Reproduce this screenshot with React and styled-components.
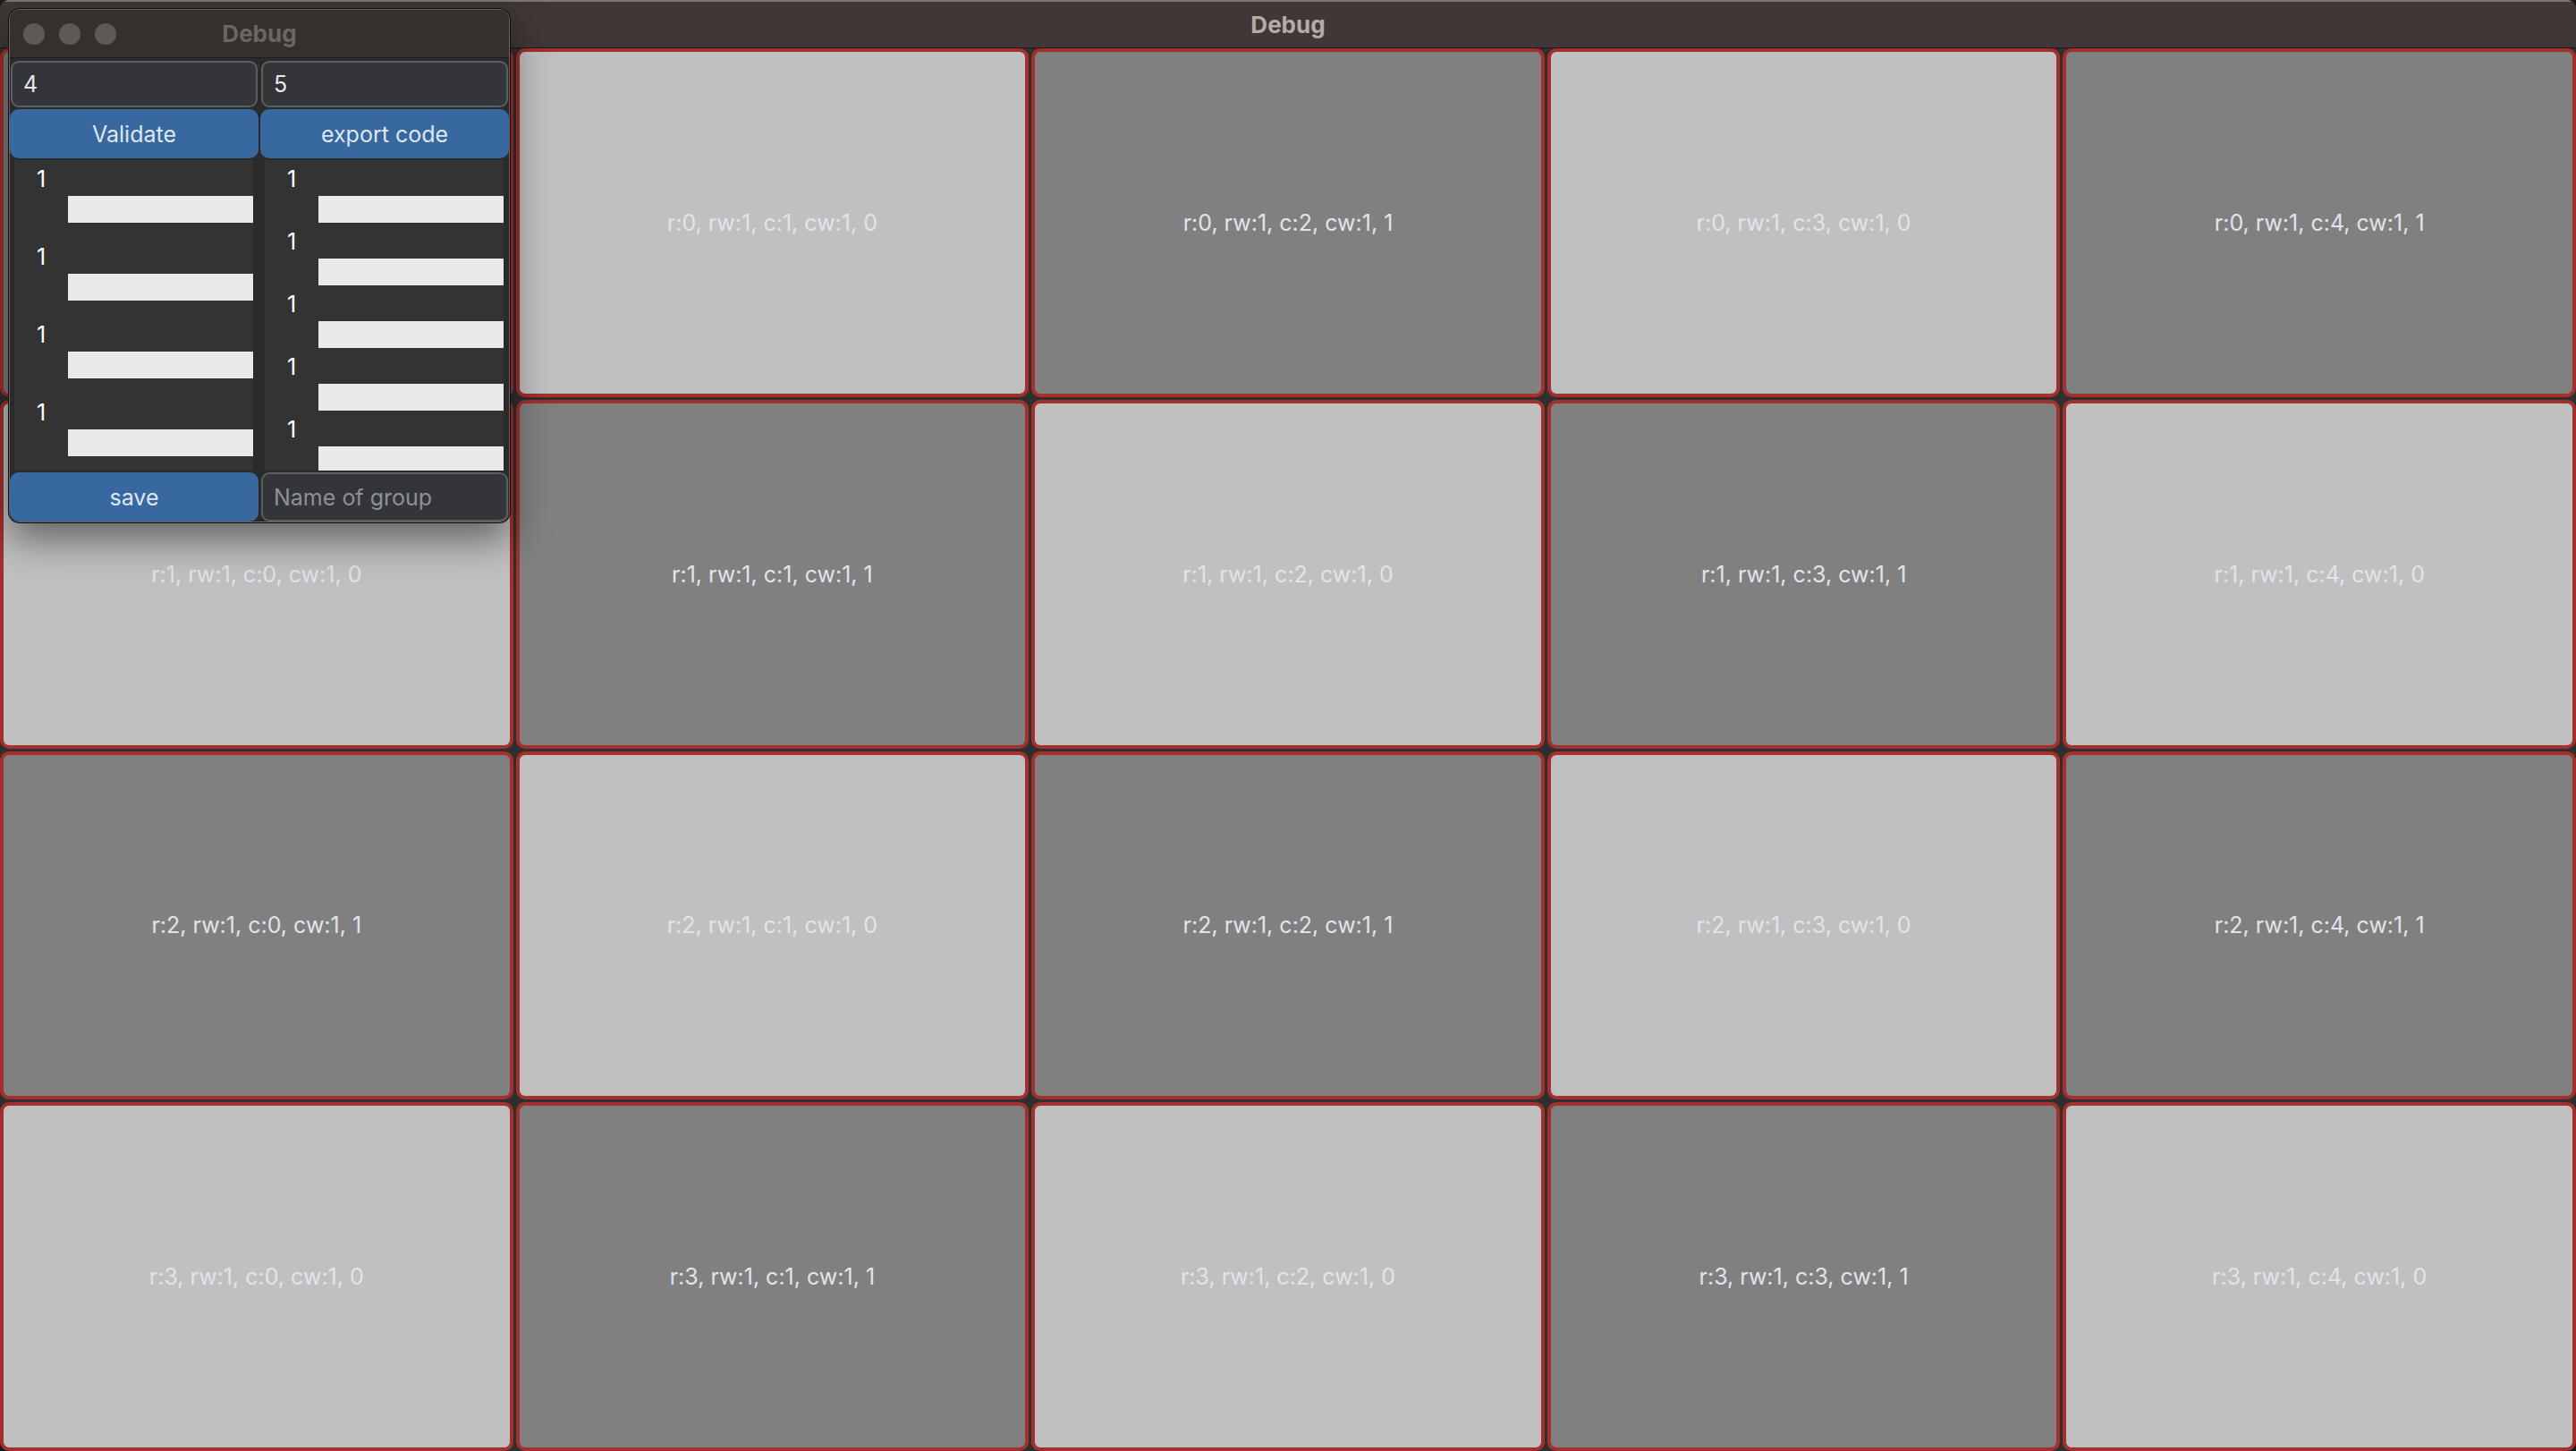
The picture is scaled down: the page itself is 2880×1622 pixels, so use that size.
import styled, { createGlobalStyle } from "styled-components";

const ROWS = 4;
const COLS = 5;

const GlobalStyle = createGlobalStyle`
    *, *::before, *::after {
        box-sizing: border-box;
    }
    html, body {
        margin: 0;
        background: #1b1b1b;
        font-family: Inter, "Noto Sans", sans-serif;
    }
    #root {
        height: 100vh;
    }
`;

const Window = styled.div`
    position: relative;
    height: 100vh;
    display: flex;
    flex-direction: column;
    border-radius: 10px;
    overflow: hidden;
    background: #2e2e2e;
`;

const TitleBar = styled.div`
    flex: none;
    height: 54px;
    display: flex;
    align-items: center;
    justify-content: center;
    background: #403836;
    border-top: 2px solid #7c7674;
    border-bottom: 1px solid #1c1a19;
`;

const Title = styled.span`
    font-size: 26px;
    font-weight: 700;
    color: ${(p) => (p.$inactive ? "#6c6662" : "#b4acaa")};
`;

const Board = styled.div`
    flex: 1;
    display: grid;
    grid-template-columns: repeat(${COLS}, 1fr);
    grid-template-rows: repeat(${ROWS}, 1fr);
    gap: 3px;
    background: #2f2f2f;
`;

const Cell = styled.div`
    display: flex;
    align-items: center;
    justify-content: center;
    border: 4px solid #a3302c;
    border-radius: 10px;
    background: ${(p) => (p.$dark ? "#808080" : "#c0c0c0")};
    color: #e0e4eb;
    font-size: 25px;
`;

const FloatWin = styled.div`
    position: absolute;
    top: 10px;
    left: 10px;
    width: 560px;
    height: 574px;
    display: flex;
    flex-direction: column;
    border: 1px solid #67625f;
    border-radius: 12px;
    overflow: hidden;
    background: #2a2a2a;
    box-shadow: 0 0 0 1px #111, 0 18px 44px rgba(0, 0, 0, 0.5);
`;

const FloatTitle = styled.div`
    flex: none;
    height: 54px;
    display: grid;
    grid-template-columns: 1fr auto 1fr;
    align-items: center;
    background: #36302c;
    border-bottom: 1px solid #1e1c1a;
`;

const Lights = styled.div`
    display: flex;
    gap: 16px;
    padding-left: 15px;
`;

const Light = styled.span`
    width: 24px;
    height: 24px;
    border-radius: 50%;
    background: #5f5955;
`;

const Body = styled.div`
    flex: 1;
    min-height: 0;
    display: grid;
    grid-template-columns: 1fr 1fr;
    grid-template-rows: 52px 55px 1fr 55px;
    column-gap: 2px;
    row-gap: 2px;
    padding-top: 3px;
`;

const Input = styled.input`
    width: auto;
    min-width: 0;
    margin: 0 1px;
    padding: 0 12px;
    border: 2px solid #5b5e62;
    border-radius: 9px;
    background: #333538;
    color: #e6e9ed;
    font-family: inherit;
    font-size: 25px;
    outline: none;
    &::placeholder {
        color: #8e9195;
    }
`;

const Button = styled.button`
    border: none;
    border-radius: ${(p) => (p.$corner ? "10px 10px 10px 12px" : "10px")};
    background: #3768a0;
    color: #dfe6ef;
    font-family: inherit;
    font-size: 25px;
    cursor: pointer;
`;

const List = styled.div`
    min-height: 0;
    margin: 0 6px 0 5px;
    padding-top: 6px;
    display: flex;
    flex-direction: column;
    gap: ${(p) => p.$gap}px;
    overflow: hidden;
    background: #333333;
`;

const Entry = styled.div`
    flex: none;
    display: flex;
    flex-direction: column;
`;

const EntryLabel = styled.span`
    padding-left: 25px;
    line-height: 30px;
    font-size: 25px;
    color: #ffffff;
`;

const Bar = styled.div`
    height: 30px;
    margin: 4px 0 0 60px;
    background: #e9e9e9;
`;

const cells = [];
for (let r = 0; r < ROWS; r++) {
    for (let c = 0; c < COLS; c++) {
        const v = (r + c + 1) % 2;
        cells.push({ r, c, v });
    }
}

const rowWeights = [1, 1, 1, 1];
const colWeights = [1, 1, 1, 1, 1];

const App = () => {
    return (
        <>
            <GlobalStyle />
            <Window>
                <TitleBar>
                    <Title>Debug</Title>
                </TitleBar>
                <Board>
                    {cells.map(({ r, c, v }) => (
                        <Cell key={`${r}-${c}`} $dark={v === 1}>
                            r:{r}, rw:1, c:{c}, cw:1, {v}
                        </Cell>
                    ))}
                </Board>

                <FloatWin>
                    <FloatTitle>
                        <Lights>
                            <Light />
                            <Light />
                            <Light />
                        </Lights>
                        <Title $inactive>Debug</Title>
                        <span />
                    </FloatTitle>
                    <Body>
                        <Input defaultValue="4" />
                        <Input defaultValue="5" />
                        <Button type="button">Validate</Button>
                        <Button type="button">export code</Button>
                        <List $gap={23}>
                            {rowWeights.map((w, i) => (
                                <Entry key={i}>
                                    <EntryLabel>{w}</EntryLabel>
                                    <Bar />
                                </Entry>
                            ))}
                        </List>
                        <List $gap={6}>
                            {colWeights.map((w, i) => (
                                <Entry key={i}>
                                    <EntryLabel>{w}</EntryLabel>
                                    <Bar />
                                </Entry>
                            ))}
                        </List>
                        <Button type="button" $corner>save</Button>
                        <Input placeholder="Name of group" />
                    </Body>
                </FloatWin>
            </Window>
        </>
    );
};

export default App;
